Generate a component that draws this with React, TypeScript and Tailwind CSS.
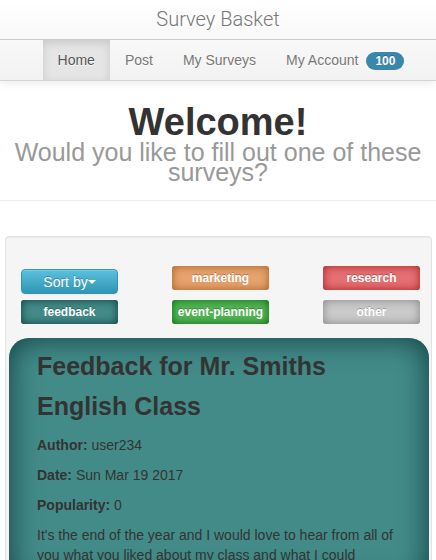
const tags = [
  {
    name: 'marketing',
    style: 'bg-[#e5a36f] shadow-[inset_0_0_10px_#a85f1f]',
  },
  {
    name: 'research',
    style: 'bg-[#e57072] shadow-[inset_0_0_10px_#a82024]',
  },
  {
    name: 'feedback',
    style: 'bg-[#438b89] shadow-[inset_0_0_10px_#0f3d3e]',
  },
  {
    name: 'event-planning',
    style: 'bg-[#53b555] shadow-[inset_0_0_10px_#0b6b10]',
  },
  {
    name: 'other',
    style: 'bg-[#cacaca] shadow-[inset_0_0_10px_#848484]',
  },
];

const links = ['Home', 'Post', 'My Surveys', 'My Account'];

function NavBar() {
  return (
    <header className="border-b border-[#d4d4d4] bg-linear-to-b from-white to-[#f2f2f2] text-[#777] shadow-[0_1px_10px_rgba(0,0,0,0.1)] [text-shadow:0_1px_0_#fff]">
      <a
        href="#"
        className="block border-b border-[#c9cccc] pt-[9px] pb-[10px] text-center font-['Roboto','Liberation_Sans',sans-serif] text-xl leading-5 font-light"
      >
        Survey Basket
      </a>
      <nav className="flex justify-center pl-[26px]">
        {links.map((link) => (
          <a
            key={link}
            href="#"
            className={
              link === 'Home'
                ? 'bg-[#e5e5e5] px-[15px] py-[10px] whitespace-nowrap text-[#555] shadow-[inset_0_3px_8px_rgba(0,0,0,0.125)]'
                : 'px-[15px] py-[10px] whitespace-nowrap'
            }
          >
            {link}
            {link === 'My Account' && (
              <span className="ml-2 inline-block rounded-full bg-[#3a87ad] px-[9px] py-[2px] text-xs leading-[14px] font-bold text-white [text-shadow:0_-1px_0_rgba(0,0,0,0.25)]">
                100
              </span>
            )}
          </a>
        ))}
      </nav>
    </header>
  );
}

function Tag({ name, style }: { name: string; style: string }) {
  return (
    <button
      type="button"
      className={`h-6 w-[97px] rounded-[3px] text-center text-xs leading-6 font-bold whitespace-nowrap text-white [text-shadow:0_-1px_0_rgba(0,0,0,0.25)] ${style}`}
    >
      {name}
    </button>
  );
}

export default function App() {
  return (
    <div className="min-h-screen bg-white font-['Liberation_Sans',Arial,sans-serif] text-sm leading-5 text-[#333]">
      <NavBar />
      <div className="border-b border-[#eee] px-3 pt-[21px] pb-[18px] text-center">
        <h1 className="text-[38px] leading-10 font-bold">Welcome!</h1>
        <p className="text-[25px] leading-5 text-[#999]">Would you like to fill out one of these surveys?</p>
      </div>
      <main className="mt-[35px] mr-1 ml-[5px] rounded-[4px] border border-[#e3e3e3] bg-[#f5f5f5] pr-[2px] pb-5 pl-[3px] shadow-[inset_0_1px_1px_rgba(0,0,0,0.05)]">
        <div className="grid grid-cols-[97px_97px_97px] items-start justify-between gap-y-[6px] pt-[29px] pr-[9px] pb-[14px] pl-3">
          <button
            type="button"
            className="mt-[3px] flex h-[25px] w-[97px] items-center justify-center rounded-[4px] border border-[#2f96b4] bg-linear-to-b from-[#5bc0de] to-[#2f96b4] text-sm text-white shadow-[inset_0_1px_0_rgba(255,255,255,0.2),0_1px_2px_rgba(0,0,0,0.05)] [text-shadow:0_-1px_0_rgba(0,0,0,0.25)]"
          >
            Sort by
            <span className="border-x-4 border-t-4 border-x-transparent border-t-white" />
          </button>
          {tags.map((tag) => (
            <Tag key={tag.name} name={tag.name} style={tag.style} />
          ))}
        </div>
        <article className="rounded-[20px] bg-[#438b89] px-7 pt-2 pb-5 shadow-[inset_0_0_30px_#0f3d3e]">
          <h2 className="text-[25px] leading-10 font-bold">Feedback for Mr. Smiths English Class</h2>
          <div className="mt-[9px] flex flex-col gap-[10px]">
            <p>
              <strong>Author:</strong> user234
            </p>
            <p>
              <strong>Date:</strong> Sun Mar 19 2017
            </p>
            <p>
              <strong>Popularity:</strong> 0
            </p>
            <p>
              It's the end of the year and I would love to hear from all of you what you liked about my class and what I
              could
            </p>
          </div>
        </article>
      </main>
    </div>
  );
}
